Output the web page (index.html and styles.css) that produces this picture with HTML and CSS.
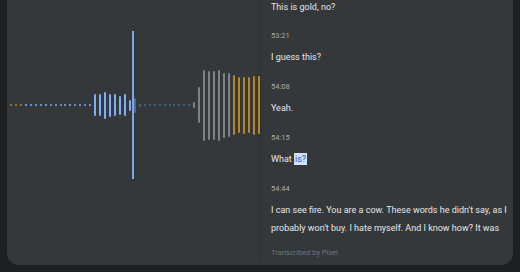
FILE: index.html
```html
<!DOCTYPE html>
<html lang="en">
<head>
  <meta charset="UTF-8">
  <title>Recorder transcript</title>
  <link rel="stylesheet" href="styles.css">
</head>
<body>
  <div class="card">
    <div class="wave-panel">
      <div class="wave" id="wave"></div>
      <div class="playhead"></div>
    </div>

    <div class="transcript">
      <p class="line first">This is gold, no?</p>

      <div class="entry">
        <span class="time">53:21</span>
        <p class="line">I guess this?</p>
      </div>
      <div class="entry">
        <span class="time">54:08</span>
        <p class="line">Yeah.</p>
      </div>
      <div class="entry">
        <span class="time">54:15</span>
        <p class="line">What <span class="selected">is?</span></p>
      </div>
      <div class="entry">
        <span class="time">54:44</span>
        <p class="line">I can see fire. You are a cow. These words he didn't say, as I probably won't buy. I hate myself. And I know how? It was</p>
      </div>

      <div class="footer">Transcribed by Pixel</div>
    </div>
  </div>

  <script>
    // [height, kind] for each bar, left to right
    const bars = [
      [2, 'amber'], [2, 'amber'], [2, 'amber'],
      [2, 'blue'], [2, 'blue'], [2, 'blue'], [2, 'blue'], [2, 'blue'], [2, 'blue'], [2, 'blue'],
      [2, 'blue'], [2, 'blue'], [2, 'blue'], [2, 'blue'], [2, 'blue'], [2, 'blue'], [2, 'blue'],
      [22, 'blue'], [22, 'blue'], [27, 'blue'], [23, 'blue'], [22, 'blue'], [19, 'blue'], [22, 'blue'], [11, 'blue'],
      [15, 'dim'], [3, 'dim'],
      [2, 'dim'], [2, 'dim'], [2, 'dim'], [2, 'dim'], [2, 'dim'],
      [2, 'dim'], [2, 'dim'], [2, 'dim'], [2, 'dim'], [2, 'dim'],
      [6, 'gray'], [36, 'gray'], [71, 'gray'], [69, 'gray'], [69, 'gray'], [71, 'gray'], [65, 'gray'], [64, 'gray'],
      [60, 'amber'], [56, 'amber'], [57, 'amber'], [56, 'amber'], [59, 'amber'], [58, 'amber']
    ];

    const wave = document.getElementById('wave');
    bars.forEach(([h, kind]) => {
      const bar = document.createElement('div');
      bar.className = 'bar ' + kind;
      bar.style.height = h + 'px';
      wave.appendChild(bar);
    });
  </script>
</body>
</html>
```

FILE: styles.css
```css
body {
  margin: 0;
  background-color: #1e1f20;
  font-family: Roboto, "Noto Sans", sans-serif;
  overflow: hidden;
}

.card {
  margin: -12px 7px 0 7px;
  height: 277px; /* bottom edge at 265 */
  box-sizing: border-box;
  padding-bottom: 12px;
  background-color: #35383b;
  border-radius: 12px;
  display: grid;
  grid-template-columns: 253px 1fr;
}

/* waveform side */
.wave-panel {
  position: relative;
  padding: 77px 0 0 3px;
}

.wave {
  display: flex;
  align-items: center;
  gap: 2.96px;
  height: 80px;
}

.bar {
  width: 2px;
  flex: none;
  border-radius: 1px;
}

.bar.blue { background-color: #82adf2; }
.bar.dim { background-color: #52698a; }
.bar.gray { background-color: #7f8285; }
.bar.amber { background-color: #b4862b; }

.playhead {
  position: absolute;
  left: 125px;
  top: 43px;
  width: 2px;
  height: 148px;
  background-color: #7ea7ea;
}

/* transcript side */
.transcript {
  border-left: 1px solid #2c2f32;
  padding: 10px 4px 0 10px;
  color: #e6e7e8;
}

.line {
  margin: 0;
  font-size: 9px;
  line-height: 18px;
}

.entry {
  margin-top: 14px;
}

.first + .entry {
  margin-top: 13px;
}

.time {
  display: block;
  font-size: 7.5px;
  line-height: 14px;
  color: #a9acaf;
  margin-bottom: 5px;
}

.selected {
  background-color: #d0e1f9;
  color: #2c5ba6;
  padding: 1px 1px;
}

.footer {
  margin-top: 9px;
  font-size: 7.5px;
  line-height: 14px;
  color: #707376;
}
```
